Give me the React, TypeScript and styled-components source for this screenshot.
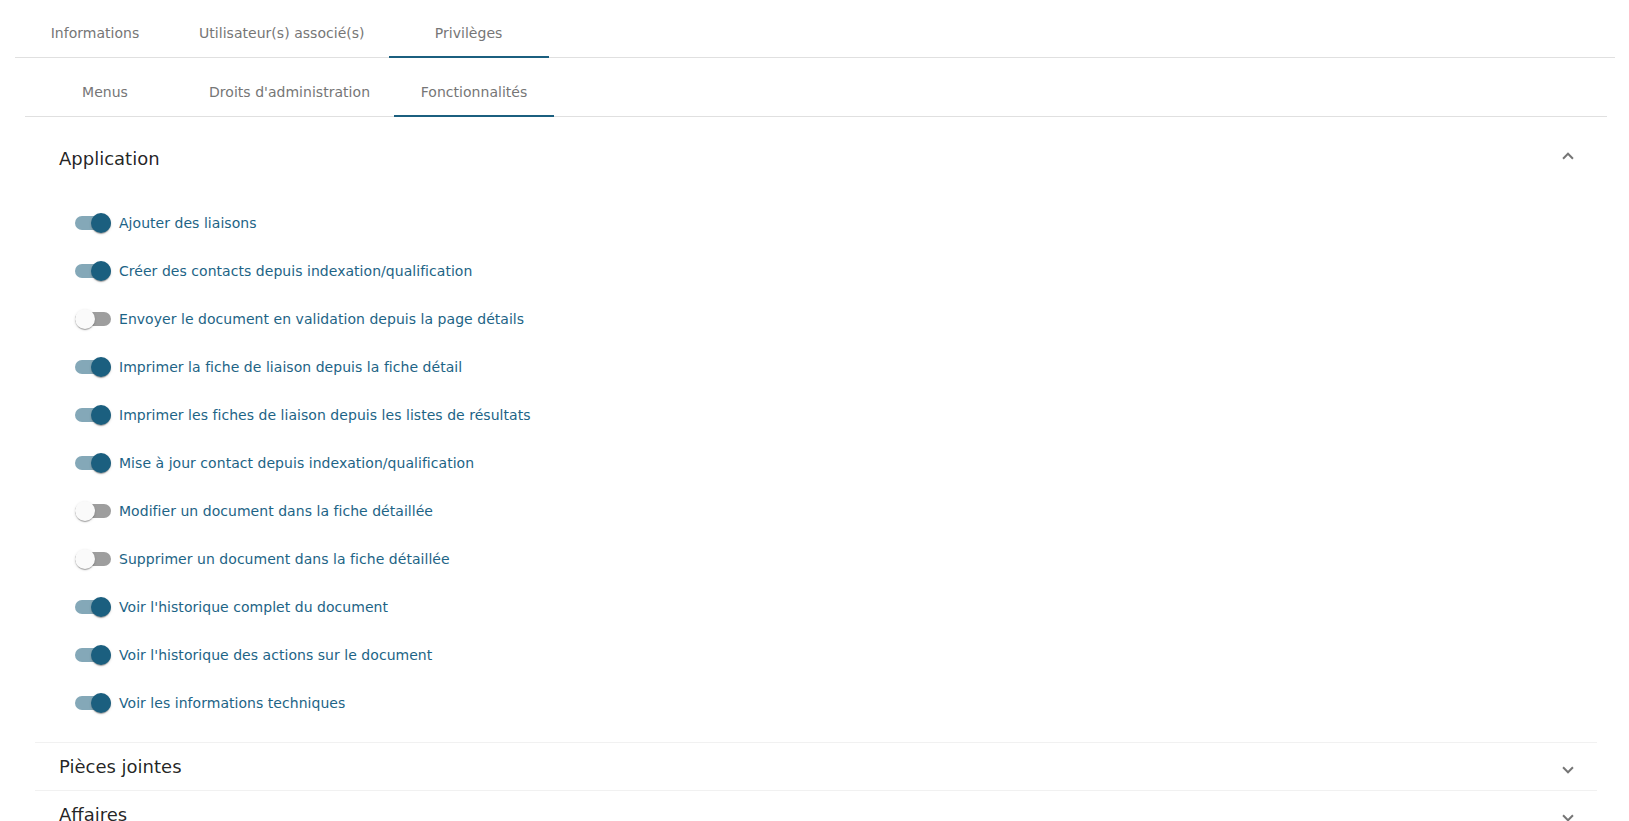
import { useState } from 'react'
import styled, { createGlobalStyle } from 'styled-components'

const GlobalStyle = createGlobalStyle`
    html, body {
        margin: 0;
        padding: 0;
        background: #ffffff;
    }
    body {
        font-family: 'DejaVu Sans', 'Liberation Sans', sans-serif;
        color: rgba(0, 0, 0, 0.87);
    }
`

const primary = '#1b5f7f'

const Page = styled.div`
    padding: 9px 14px 0 15px;
`

const TabBar = styled.div`
    display: flex;
    border-bottom: 1px solid #e0e0e0;
`

const Tab = styled.div<{ active?: boolean }>`
    position: relative;
    display: flex;
    align-items: center;
    justify-content: center;
    box-sizing: border-box;
    height: 48px;
    min-width: 160px;
    padding: 0 24px;
    font-size: 14px;
    letter-spacing: 0.03px;
    color: #767676;
    white-space: nowrap;
    cursor: pointer;

    &::after {
        content: '';
        position: absolute;
        left: 0;
        right: 0;
        bottom: -1px;
        height: 2px;
        background: ${({ active }) => (active ? primary : 'transparent')};
    }
`

const TabBody = styled.div`
    padding: 10px 8px 0 10px;
`

const Panels = styled.div`
    padding: 10px 10px 0 10px;
`

const Panel = styled.div<{ first?: boolean }>`
    border-top: ${({ first }) => (first ? 'none' : '1px solid #f1f1f1')};
    background: #ffffff;
`

const PanelHeader = styled.div<{ expanded?: boolean }>`
    display: flex;
    align-items: center;
    justify-content: space-between;
    box-sizing: border-box;
    height: ${({ expanded }) => (expanded ? '64px' : '47px')};
    padding: ${({ expanded }) => (expanded ? '0 24px 2px 24px' : '0 24px')};
    cursor: pointer;
`

const PanelTitle = styled.span`
    font-size: 18px;
    color: rgba(0, 0, 0, 0.87);
`

const Indicator = styled.span<{ expanded?: boolean }>`
    display: inline-block;
    width: 0;
    height: 0;
    padding: 3px;
    margin-right: 1px;
    border-style: solid;
    border-width: 0 2px 2px 0;
    border-color: rgba(0, 0, 0, 0.54);
    transform: rotate(${({ expanded }) => (expanded ? '225deg' : '45deg')});
    margin-top: ${({ expanded }) => (expanded ? '0' : '3px')};
`

const PanelBody = styled.div`
    padding: 8px 24px 15px 24px;
`

const Row = styled.label`
    display: flex;
    align-items: center;
    height: 48px;
    padding-left: 16px;
    cursor: pointer;
`

const Track = styled.span<{ checked: boolean }>`
    position: relative;
    flex: none;
    width: 36px;
    height: 14px;
    border-radius: 8px;
    background: ${({ checked }) => (checked ? '#84a8b8' : '#9e9e9e')};
`

const Thumb = styled.span<{ checked: boolean }>`
    position: absolute;
    top: -3px;
    left: ${({ checked }) => (checked ? '16px' : '0')};
    width: 20px;
    height: 20px;
    border-radius: 50%;
    background: ${({ checked }) => (checked ? primary : '#fafafa')};
    box-shadow: 0 2px 1px -1px rgba(0, 0, 0, 0.2), 0 1px 1px 0 rgba(0, 0, 0, 0.14),
        0 1px 3px 0 rgba(0, 0, 0, 0.12);
`

const RowLabel = styled.span`
    margin-left: 8px;
    font-size: 14px;
    letter-spacing: 0.04px;
    color: #1d6486;
    white-space: nowrap;
`

const rights = [
    { label: 'Ajouter des liaisons', on: true },
    { label: 'Créer des contacts depuis indexation/qualification', on: true },
    { label: 'Envoyer le document en validation depuis la page détails', on: false },
    { label: 'Imprimer la fiche de liaison depuis la fiche détail', on: true },
    { label: 'Imprimer les fiches de liaison depuis les listes de résultats', on: true },
    { label: 'Mise à jour contact depuis indexation/qualification', on: true },
    { label: 'Modifier un document dans la fiche détaillée', on: false },
    { label: 'Supprimer un document dans la fiche détaillée', on: false },
    { label: "Voir l'historique complet du document", on: true },
    { label: "Voir l'historique des actions sur le document", on: true },
    { label: 'Voir les informations techniques', on: true },
]

function Toggle({ label, initial }: { label: string; initial: boolean }) {
    const [checked, setChecked] = useState(initial)
    return (
        <Row onClick={() => setChecked(!checked)}>
            <Track checked={checked}>
                <Thumb checked={checked} />
            </Track>
            <RowLabel>{label}</RowLabel>
        </Row>
    )
}

export default function App() {
    const [open, setOpen] = useState<string>('Application')
    const sections = ['Application', 'Pièces jointes', 'Affaires']

    return (
        <Page>
            <GlobalStyle />
            <TabBar>
                <Tab>Informations</Tab>
                <Tab>Utilisateur(s) associé(s)</Tab>
                <Tab active>Privilèges</Tab>
            </TabBar>
            <TabBody>
                <TabBar>
                    <Tab>Menus</Tab>
                    <Tab>Droits d'administration</Tab>
                    <Tab active>Fonctionnalités</Tab>
                </TabBar>
                <Panels>
                    {sections.map((name, i) => {
                        const expanded = open === name
                        return (
                            <Panel key={name} first={i === 0}>
                                <PanelHeader
                                    expanded={expanded}
                                    onClick={() => setOpen(expanded ? '' : name)}
                                >
                                    <PanelTitle>{name}</PanelTitle>
                                    <Indicator expanded={expanded} />
                                </PanelHeader>
                                {expanded && name === 'Application' && (
                                    <PanelBody>
                                        {rights.map((r) => (
                                            <Toggle
                                                key={r.label}
                                                label={r.label}
                                                initial={r.on}
                                            />
                                        ))}
                                    </PanelBody>
                                )}
                            </Panel>
                        )
                    })}
                </Panels>
            </TabBody>
        </Page>
    )
}
